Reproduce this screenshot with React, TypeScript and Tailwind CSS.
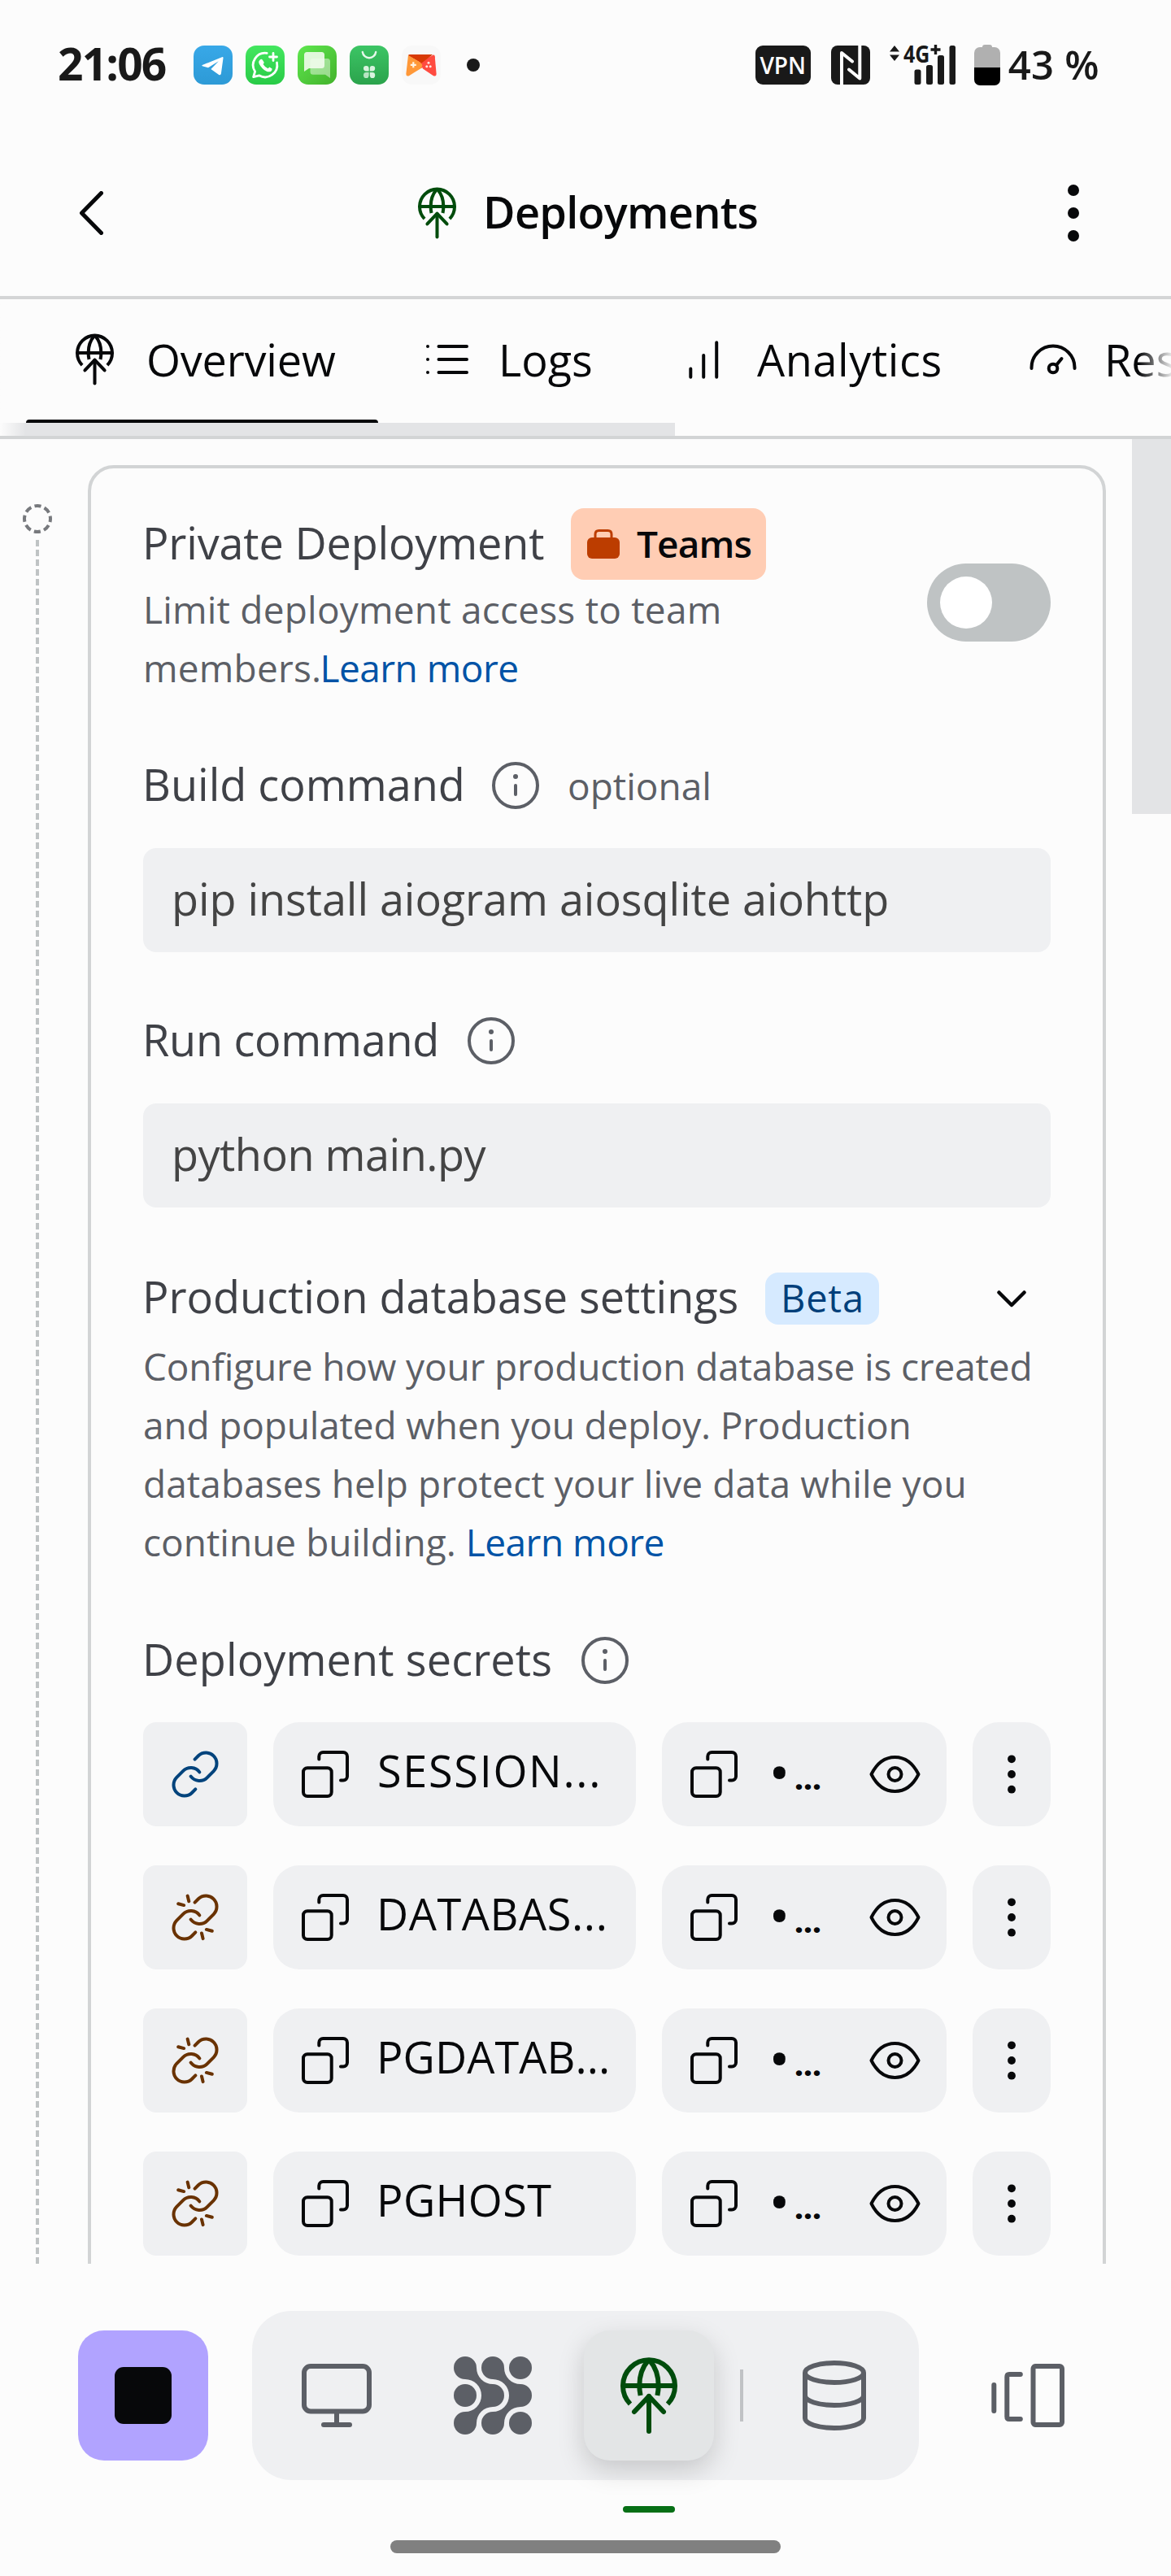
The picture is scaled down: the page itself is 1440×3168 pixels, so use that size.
import React from "react";

type IconProps = { className?: string };

function DeployIcon({ className }: IconProps) {
  return (
    <svg viewBox="0 0 70 94" fill="none" stroke="currentColor" strokeWidth="6" className={className}>
      <path d="M12 57.5A32 32 0 1 1 58 57.5" />
      <path d="M3 35H67" />
      <path d="M34 4C27 12 23.3 23 23.3 35C23.3 39 23.6 42 24.6 47" />
      <path d="M36 4C43 12 46.7 23 46.7 35C46.7 39 46.4 42 45.4 47" />
      <path d="M17 67L35 48L53 67" strokeLinecap="round" strokeLinejoin="round" />
      <path d="M35 48V91" strokeLinecap="round" />
    </svg>
  );
}

function InfoIcon() {
  return (
    <svg viewBox="0 0 64 64" fill="none" className="size-16 shrink-0 text-[#5c5f66]">
      <circle cx="32" cy="32" r="27" stroke="currentColor" strokeWidth="4" />
      <circle cx="32" cy="21" r="3" fill="currentColor" />
      <path d="M32 32V43" stroke="currentColor" strokeWidth="4" strokeLinecap="round" />
    </svg>
  );
}

function CopyIcon() {
  return (
    <svg viewBox="0 0 58 58" fill="none" stroke="currentColor" strokeWidth="4" strokeLinecap="round" strokeLinejoin="round" className="size-[58px] shrink-0">
      <rect x="2" y="21.3" width="34.7" height="34.7" rx="5" />
      <path d="M21.3 10.6V7A5 5 0 0 1 26.3 2H51A5 5 0 0 1 56 7V31.5A5 5 0 0 1 51 36.5H48" />
    </svg>
  );
}

function LinkIcon({ broken }: { broken: boolean }) {
  return (
    <svg viewBox="0 0 24 24" fill="none" stroke="currentColor" strokeWidth="1.5" strokeLinecap="round" strokeLinejoin="round" className="size-16">
      <path d="M10 13a5 5 0 0 0 7.54.54l3-3a5 5 0 0 0-7.07-7.07l-1.62 1.61" />
      <path d="M14 11a5 5 0 0 0-7.54-.54l-3 3a5 5 0 0 0 7.07 7.07l1.61-1.61" />
      {broken && <path d="M8.5 2.1L9.1 4.6M4.2 5.7L6.8 6.4M15 19.3L15.6 21.8M17.2 17.6L19.8 18.3" />}
    </svg>
  );
}

function EyeIcon() {
  return (
    <svg viewBox="0 0 63 46" fill="none" stroke="currentColor" strokeWidth="4" strokeLinejoin="round" className="h-[46px] w-[63px] shrink-0">
      <path d="M2.5 23C9 10 19 2 31.5 2S54 10 60.5 23C54 36 44 44 31.5 44S9 36 2.5 23Z" />
      <circle cx="31.5" cy="23" r="8" />
    </svg>
  );
}

function KebabIcon() {
  return (
    <svg viewBox="0 0 12 50" fill="currentColor" className="h-[50px] w-3">
      <circle cx="6" cy="6.3" r="4.9" />
      <circle cx="6" cy="25" r="4.9" />
      <circle cx="6" cy="43.7" r="4.9" />
    </svg>
  );
}

function StatusBar() {
  return (
    <div className="flex h-40 items-center text-[#191919]">
      <span className="ml-[71px] w-[167px] pb-[4px] text-[55px] leading-[70px] font-bold tracking-[-1.8px]">21:06</span>
      <div className="flex gap-4">
        <svg viewBox="0 0 48 48" className="size-12 rounded-[13px] bg-linear-to-b from-[#38a8e8] to-[#2d9ad6]">
          <path d="M10.8 24L35 14.2Q36.8 13.7 36.5 15.6L33.9 34.6Q33.3 37.2 31.2 35.9L21.4 28.9L30.8 19.2L18 27.2L10.8 25.2Q9.9 24.5 10.8 24Z" fill="#fff" />
        </svg>
        <svg viewBox="0 0 48 48" fill="none" className="size-12 rounded-[13px] bg-linear-to-b from-[#43e75f] to-[#28cb47]">
          <path d="M26.2 9.4A14.8 14.8 0 0 0 11.6 32L9.6 38.6L16.6 36.8A14.8 14.8 0 0 0 38.5 21" stroke="#fff" strokeWidth="2.8" strokeLinejoin="round" strokeLinecap="round" />
          <path d="M34 9.5V18.5M29.5 14H38.5" stroke="#fff" strokeWidth="2.8" strokeLinecap="round" />
          <path d="M17.8 17.4Q19.6 15.8 21 18L22.6 20.4Q22.9 21.4 21.6 23Q24 27 27.6 28.3L29.3 26.6L32.6 28.4Q32.7 31.6 29.4 32.3Q25.4 32.6 20.6 27.9Q15.4 22.3 16.4 19.2Z" fill="#fff" />
        </svg>
        <svg viewBox="0 0 48 48" className="size-12 rounded-[13px] bg-linear-to-br from-[#5fe84f] to-[#43b22b]">
          <path d="M19 16H36.5Q40 16 40 19.5V40L34 35.8H19Q15.5 35.8 15.5 32.3V19.5Q15.5 16 19 16Z" fill="#fff" fillOpacity=".45" />
          <path d="M11.5 8H29.5Q33 8 33 11.5V24.5Q33 28 29.5 28H14L8 32V11.5Q8 8 11.5 8Z" fill="#f1fcec" fillOpacity=".9" />
        </svg>
        <svg viewBox="0 0 48 48" fill="none" className="size-12 rounded-[13px] bg-linear-to-b from-[#3cc565] to-[#2ba34c]">
          <path d="M15.8 8A8.3 8.6 0 0 0 32.2 8" stroke="#e6f8eb" strokeWidth="2.4" strokeLinecap="round" />
          <g fill="#d9f3df">
            <path d="M20 25H20.5Q23.6 25 23.6 28V31.4H20.4Q17 31.4 17 28Q17 25 20 25Z" />
            <path d="M28 25H27.5Q24.8 25 24.8 28V31.4H28Q31.2 31.4 31.2 28Q31.2 25 28 25Z" />
            <path d="M20.4 33H23.6V36.4Q23.6 40 20.4 40Q17 40 17 36.4Q17 33 20.4 33Z" fillOpacity=".8" />
            <path d="M28 33H24.8V36.4Q24.8 40 28 40Q31.2 40 31.2 36.4Q31.2 33 28 33Z" />
          </g>
        </svg>
        <svg viewBox="0 0 48 48" className="size-12 rounded-[13px] bg-[#f8f8f8]">
          <path d="M39.2 11.5L22 20L26 28.4L39 37.2Q42.8 38.5 42.6 34.6L40.7 13.5Q40.4 11.2 39.2 11.5Z" fill="#ff4b40" />
          <path d="M9.8 11H38.2L24.2 21.8L7.8 12.2Q8.6 11 9.8 11Z" fill="#d83a05" />
          <path d="M39.7 11.6L19 28L24 28L41 15Z" fill="#ff4b40" />
          <path d="M8 12L22 20.2Q28 24.5 23 28.4L9 37.2Q5.2 38.5 5.4 34.6Z" fill="#ff9838" />
          <path d="M14.3 20.3V27.3M10.8 23.8H17.8" stroke="#fff3e4" strokeWidth="2.2" />
          <g fill="#ffe6e0">
            <circle cx="33" cy="21.2" r="1.5" />
            <circle cx="30.8" cy="25.8" r="1.5" />
            <circle cx="35.2" cy="25.8" r="1.5" />
          </g>
        </svg>
      </div>
      <div className="ml-8 size-4 rounded-full bg-[#191919]" />
      <div className="ml-auto flex h-12 w-[68px] items-center justify-center rounded-[9px] bg-[#191919] pb-px text-[28px] leading-none font-semibold text-white">VPN</div>
      <svg viewBox="0 0 48 48" fill="none" stroke="#fff" strokeWidth="4" strokeLinejoin="round" className="ml-[25px] size-12 rounded-[8px] bg-[#191919]">
        <path d="M13 48V9L26 19.5" strokeLinecap="round" />
        <path d="M35.3 0V40.5L22 29.5" strokeLinecap="round" />
      </svg>
      <div className="relative ml-[23px] h-[50px] w-[83px]">
        <svg viewBox="0 0 83 50" fill="currentColor" className="size-full">
          <path d="M7 1L13 8.5H1ZM7 20L13 12.5H1Z" />
          <rect x="31.5" y="30.5" width="8" height="18.5" rx="2.5" />
          <rect x="46" y="25" width="8" height="24" rx="2.5" />
          <rect x="60" y="13" width="8" height="36" rx="2.5" />
          <rect x="74.5" y="1" width="7.5" height="48" rx="2.5" />
          <path d="M57.5 0V12M51.5 6H63.5" stroke="currentColor" strokeWidth="3.4" />
        </svg>
        <span className="absolute top-[-9px] left-[18px] origin-left scale-x-[.86] text-[29px] leading-[40px] font-bold">4G</span>
      </div>
      <div className="ml-[22px] flex h-[51px] w-8 flex-col items-center pb-px">
        <div className="h-1 w-3 rounded-t bg-[#b0b0b0]" />
        <div className="h-[25px] w-8 rounded-t-[7px] bg-[#b0b0b0]" />
        <div className="h-[22px] w-8 rounded-b-[7px] bg-black" />
      </div>
      <span className="mr-[88px] ml-[10px] pb-[2px] text-[49px] leading-[60px] font-semibold tracking-[0.3px] whitespace-nowrap">43 %</span>
    </div>
  );
}

function Header() {
  return (
    <header className="flex h-[208px] items-center border-b-4 border-[#d4d5d6] text-[#07080a]">
      <svg viewBox="0 0 30 54" fill="none" stroke="currentColor" strokeWidth="5" strokeLinecap="round" strokeLinejoin="round" className="ml-[97px] h-[54px] w-[30px]">
        <path d="M27.5 2.5L3.5 27L27.5 51.5" />
      </svg>
      <DeployIcon className="ml-[387px] h-16 w-[47px] text-[#004c0c]" />
      <h1 className="ml-[33px] pb-1 text-[54px] leading-[80px] font-semibold tracking-[-0.7px]">Deployments</h1>
      <svg viewBox="0 0 14 72" fill="currentColor" className="mr-[113px] ml-auto h-[72px] w-[14px]">
        <circle cx="7" cy="8" r="7" />
        <circle cx="7" cy="36" r="7" />
        <circle cx="7" cy="64" r="7" />
      </svg>
    </header>
  );
}

function Tabs() {
  return (
    <nav className="relative h-[172px] overflow-hidden border-b-4 border-[#d2d4d5] text-[54px] text-[#07080a]">
      <div className="flex h-[148px] items-center whitespace-nowrap">
        <DeployIcon className="ml-[93px] h-16 w-[47px] shrink-0" />
        <span className="ml-10 w-[344px] shrink-0 tracking-[-0.2px]">Overview</span>
        <svg viewBox="0 0 52 38" fill="none" stroke="currentColor" strokeWidth="4" strokeLinecap="round" className="h-[38px] w-[52px] shrink-0">
          <path d="M15.5 3H50M15.5 19H50M15.5 35H50M2 3V3.01M2 19V19.01M2 35V35.01" />
        </svg>
        <span className="ml-[37px] w-[234px] shrink-0">Logs</span>
        <svg viewBox="0 0 37 47" fill="none" stroke="currentColor" strokeWidth="4" strokeLinecap="round" className="h-[47px] w-[37px] shrink-0">
          <path d="M2.3 34.5V44.7M18.2 18V44.7M34.2 2.3V44.7" />
        </svg>
        <span className="ml-[47px] w-[335px] shrink-0 tracking-[0.6px]">Analytics</span>
        <svg viewBox="0 0 58 38" fill="none" stroke="currentColor" strokeWidth="4" strokeLinecap="round" className="h-[38px] w-[58px] shrink-0">
          <path d="M2.5 30V29A26.5 26.5 0 0 1 55.5 29V30" />
          <circle cx="29" cy="30" r="5.3" />
          <path d="M33 26L39.5 18" />
        </svg>
        <span className="ml-[34px]">Resources</span>
      </div>
      <div className="ml-8 h-1 w-[433px] rounded-t-full bg-[#07080a]" />
      <div className="h-4 w-[830px] bg-[#e3e4e6]" />
      <div className="absolute inset-y-0 left-0 w-8 bg-linear-to-r from-[#fcfcfc] to-transparent" />
      <div className="absolute inset-y-0 right-0 w-10 bg-linear-to-l from-[#fcfcfc]/90 to-transparent" />
    </nav>
  );
}

function CommandField({ label, value, optional, valueClass }: { label: React.ReactNode; value: string; optional?: boolean; valueClass: string }) {
  return (
    <div className="flex flex-col gap-[45px]">
      <div className="flex h-16 items-start text-[#3f4147]">
        {label}
        <InfoIcon />
        {optional && <span className="ml-8 text-[46px] leading-[64px] text-[#5c5f66]">optional</span>}
      </div>
      <div className="flex h-32 w-[1116px] items-center rounded-2xl bg-[#eff0f2] pb-[3px] pl-[35px] text-[54px] whitespace-nowrap text-[#444444]">
        <span className={valueClass}>{value}</span>
      </div>
    </div>
  );
}

function Secret({ name, linked, nameClass }: { name: string; linked?: boolean; nameClass: string }) {
  return (
    <div className="flex h-32 gap-8 text-[#07080a]">
      {linked ? (
        <div className="flex w-32 items-center justify-center rounded-2xl bg-[#eff0f2] text-[#00437c]">
          <LinkIcon broken={false} />
        </div>
      ) : (
        <div className="flex w-32 items-center justify-center rounded-2xl bg-[#eff0f2] text-[#693200]">
          <LinkIcon broken />
        </div>
      )}
      <div className="flex w-[446px] items-center rounded-[32px] bg-[#eff0f2] pl-[35px]">
        <CopyIcon />
        <span className={nameClass}>{name}</span>
      </div>
      <div className="flex w-[350px] items-center rounded-[32px] bg-[#eff0f2] pl-[35px]">
        <CopyIcon />
        <span className="ml-[39px] flex h-[76px] w-[123px] items-start font-['Roboto',sans-serif]">
          <span className="w-[30px] text-[74px] leading-[76px]">•</span>
          <span className="text-[46px] leading-[82px] font-bold tracking-[-2.4px]">...</span>
        </span>
        <EyeIcon />
      </div>
      <div className="flex w-24 items-center justify-center rounded-[32px] bg-[#eff0f2]">
        <KebabIcon />
      </div>
    </div>
  );
}

function Content() {
  return (
    <main className="flex h-[2244px] items-start overflow-hidden">
      <div className="flex w-[108px] flex-col pt-20 pl-7">
        <svg viewBox="0 0 36 36" fill="none" className="size-9">
          <circle cx="18" cy="18" r="16" stroke="#77797d" strokeWidth="4" strokeDasharray="8.2 4.366" strokeDashoffset="4.1" />
        </svg>
        <div className="mt-2 ml-4 h-[2120px] w-1 bg-[repeating-linear-gradient(to_bottom,#bfc3c4_0_8px,transparent_8px_12px)]" />
      </div>
      <div className="mt-8 h-[2300px] w-[1252px] rounded-[32px] border-4 border-[#d2d4d5] px-16 pt-[49px]">
        <div className="flex h-[232px] items-center justify-between">
          <div className="h-full">
            <div className="flex h-[88px] items-start">
              <span className="-ml-px w-[527px] text-[54px] leading-[84px] tracking-[-0.16px] whitespace-nowrap text-[#3f4147]">Private Deployment</span>
              <div className="flex h-[88px] w-60 items-center rounded-2xl bg-[#ffcdb4] pl-5">
                <svg viewBox="0 0 40 36" fill="none" className="h-9 w-10 shrink-0">
                  <rect y="10" width="40" height="26" rx="6" fill="#bc3d00" />
                  <path d="M10 11V6Q10 1.5 14.5 1.5H25.5Q30 1.5 30 6V11" stroke="#bc3d00" strokeWidth="3" />
                </svg>
                <span className="ml-[21px] pb-[2px] text-[46px] leading-[72px] font-semibold tracking-[-0.9px] text-[#07080a]">Teams</span>
              </div>
            </div>
            <p className="text-[46px] leading-[72px] tracking-[0.2px] whitespace-nowrap text-[#5c5f66]">
              Limit deployment access to team
              <br />
              members.<a className="-ml-[2px] tracking-[-0.5px] text-[#0053a6]">Learn more</a>
            </p>
          </div>
          <div className="flex h-24 w-[152px] items-center rounded-full bg-[#bfc3c4] pl-4">
            <div className="size-16 rounded-full bg-white" />
          </div>
        </div>

        <div className="mt-[77px]">
          <CommandField
            label={<span className="-ml-px w-[427px] text-[54px] leading-[60px]">Build command</span>}
            value="pip install aiogram aiosqlite aiohttp"
            valueClass="tracking-[-0.07px]"
            optional
          />
        </div>
        <div className="mt-[77px]">
          <CommandField
            label={<span className="-ml-px w-[397px] text-[54px] leading-[60px] tracking-[-0.27px]">Run command</span>}
            value="python main.py"
            valueClass="tracking-[-0.5px]"
          />
        </div>

        <div className="mt-20 flex h-16 items-start">
          <span className="-ml-px w-[766px] text-[54px] leading-[58px] whitespace-nowrap text-[#3f4147]">Production database settings</span>
          <span className="h-16 w-[140px] rounded-2xl bg-[#d6eaff] pl-[19px] text-[47px] leading-[62px] tracking-[0.8px] text-[#003f7a]">Beta</span>
          <svg viewBox="0 0 36 21" fill="none" stroke="#07080a" strokeWidth="4.5" strokeLinecap="round" strokeLinejoin="round" className="mt-[22px] ml-[145px] h-[21px] w-9">
            <path d="M2.5 2.5L18 18L33.5 2.5" />
          </svg>
        </div>
        <p className="mt-[15px] text-[46px] leading-[72px] whitespace-nowrap text-[#5c5f66]">
          <span className="tracking-[-0.15px]">Configure how your production database is created</span>
          <br />
          <span className="tracking-[-0.16px]">and populated when you deploy. Production</span>
          <br />
          <span className="tracking-[0.08px]">databases help protect your live data while you</span>
          <br />
          continue building. <a className="tracking-[-0.5px] text-[#0053a6]">Learn more</a>
        </p>

        <div className="mt-[78px] flex h-16 items-start">
          <span className="-ml-px w-[537px] text-[54px] leading-[60px] tracking-[0.13px] text-[#3f4147]">Deployment secrets</span>
          <InfoIcon />
        </div>
        <div className="mt-11 flex flex-col gap-12">
          <Secret name="SESSION..." linked nameClass="ml-[35px] pb-[10px] text-[54px] tracking-[1.7px]" />
          <Secret name="DATABAS..." nameClass="ml-[34px] pb-[10px] text-[54px] tracking-[0.6px]" />
          <Secret name="PGDATAB..." nameClass="ml-[34px] pb-[10px] text-[54px] tracking-[0.1px]" />
          <Secret name="PGHOST" nameClass="ml-[34px] pb-[10px] text-[54px] tracking-[0.4px]" />
        </div>
      </div>
      <div className="ml-8 h-[461px] w-12 bg-[#e3e4e6]" />
    </main>
  );
}

const BLOB = "M14 28A20 20 0 0 1 14 68A14 14 0 1 0 28 82A20 20 0 0 1 48 62A14 14 0 0 0 48 34A20 20 0 0 1 28 14A14 14 0 1 0 14 28Z";

function Dock() {
  return (
    <footer className="flex h-[384px] flex-col pt-[58px] text-[#5c5f66]">
      <div className="flex h-52 items-center">
        <div className="ml-24 flex size-40 items-center justify-center rounded-[32px] bg-[#b1a3ff]">
          <div className="size-[70px] rounded-[11px] bg-[#07080a]" />
        </div>
        <div className="ml-[54px] flex h-52 w-[820px] items-center rounded-[48px] bg-[#eff0f2]">
          <svg viewBox="0 0 86 78" fill="none" stroke="currentColor" strokeWidth="6" strokeLinecap="round" className="ml-[61px] h-[78px] w-[86px]">
            <rect x="3" y="3" width="80" height="55.5" rx="8" />
            <path d="M43 59V74M27 75H59" />
          </svg>
          <svg viewBox="0 0 96 96" fill="currentColor" className="ml-[101px] size-24">
            <path d={BLOB} />
            <path d={BLOB} transform="translate(34 0)" />
            <circle cx="14" cy="48" r="14" />
            <circle cx="82" cy="14" r="14" />
            <circle cx="82" cy="82" r="14" />
          </svg>
          <div className="ml-16 flex size-40 items-center justify-center rounded-[32px] bg-[#e3e5e6] shadow-[0_12px_32px_rgba(0,0,0,0.17)]">
            <DeployIcon className="h-[94px] w-[70px] text-[#004c0c]" />
          </div>
          <div className="ml-8 h-16 w-1 bg-[#c0c2c5]" />
          <svg viewBox="0 0 78 86" fill="none" stroke="currentColor" strokeWidth="6" className="ml-[73px] h-[86px] w-[78px]">
            <ellipse cx="39" cy="15" rx="36" ry="12" />
            <path d="M3 43A36 12 0 0 0 75 43" />
            <path d="M3 15V71A36 12 0 0 0 75 71V15" />
          </svg>
        </div>
        <svg viewBox="0 0 90 78" fill="none" stroke="currentColor" strokeWidth="6" strokeLinecap="round" strokeLinejoin="round" className="ml-[89px] h-[78px] w-[90px]">
          <rect x="51.5" y="3" width="35.5" height="72" rx="3" />
          <path d="M35.8 13H22Q19.3 13 19.3 16V65Q19.3 68 22 68H35.8" />
          <path d="M3.3 26V58" />
        </svg>
      </div>
      <div className="mt-8 ml-[766px] h-2 w-16 rounded bg-[#066f15]" />
      <div className="mt-[34px] ml-[480px] h-4 w-[480px] rounded-full bg-[#808080]" />
    </footer>
  );
}

export default function App() {
  return (
    <div className="h-[3168px] w-[1440px] overflow-hidden bg-[#fcfcfc] font-['Open_Sans',sans-serif]">
      <StatusBar />
      <Header />
      <Tabs />
      <Content />
      <Dock />
    </div>
  );
}
